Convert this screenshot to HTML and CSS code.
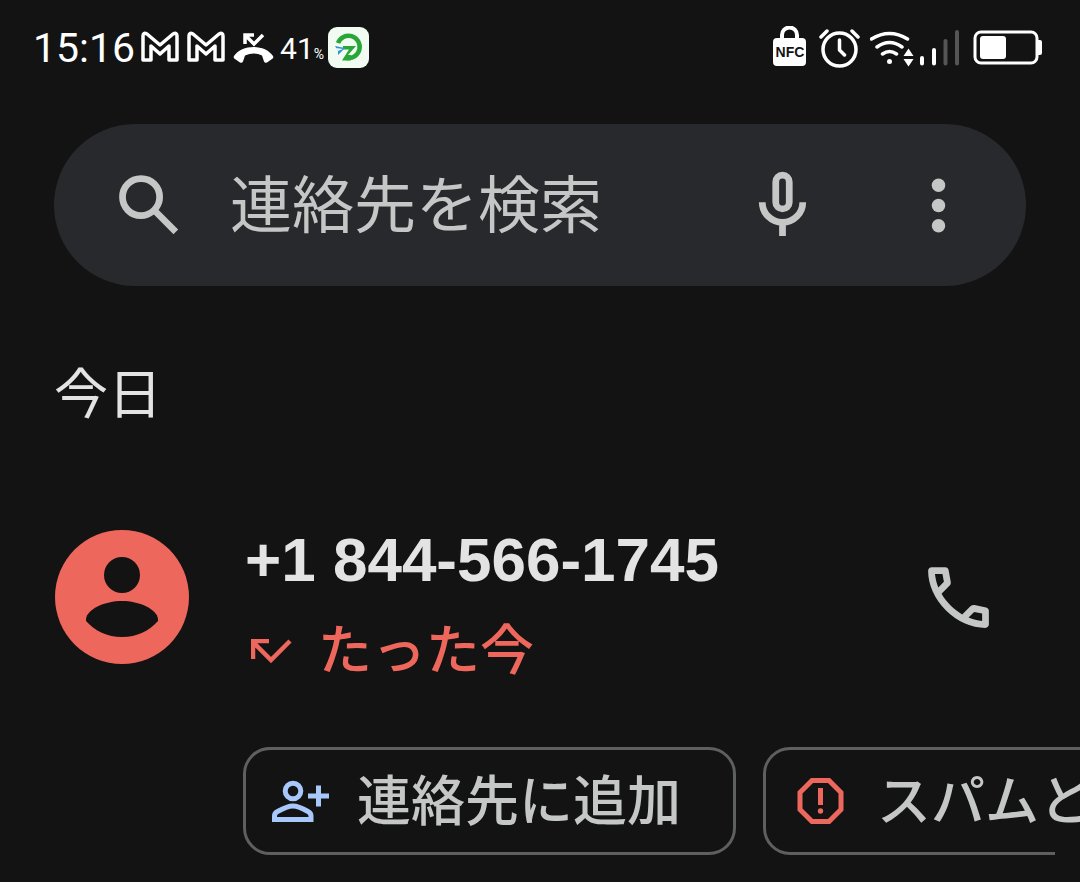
FILE: index.html
```html
<!DOCTYPE html>
<html lang="ja">
  <head>
    <meta charset="UTF-8" />
    <title>通話履歴</title>
    <meta name="viewport" content="width=device-width, initial-scale=1.0" />
    <link rel="stylesheet" href="styles.css">
  </head>
  <body>
    <header class="status-bar">
      <div class="status-left">
        <span class="clock">15:16</span>
        <svg width="40" height="44" viewBox="0 0 40 44" fill="none" stroke="#fff" stroke-width="3.500" stroke-linejoin="round">
          <path d="M2 34V10q0-4 4-2L19 19 32 8q4-2 4 2v24h-8V20l-9 8-9-8v14z" />
        </svg>
        <svg width="40" height="44" viewBox="0 0 40 44" fill="none" stroke="#fff" stroke-width="3.500" stroke-linejoin="round">
          <path d="M2 34V10q0-4 4-2L19 19 32 8q4-2 4 2v24h-8V20l-9 8-9-8v14z" />
        </svg>
        <svg width="41" height="44" viewBox="0 0 41 44">
          <path d="M12 18V9h9M12 9l9 9 9-9" fill="none" stroke="#fff" stroke-width="3.500" />
          <path d="M1 30C9 18 32 18 40 30q1 2-1 3l-5 3.500q-2 1-3-1l-2-6q-8-4-17 0l-2 6q-1 2-3 1L2 33q-2-1-1-3z" fill="#fff" />
        </svg>
        <span class="percent">41<small>%</small></span>
        <svg width="41" height="44" viewBox="0 0 41 44">
          <rect y="1" width="41" height="41" rx="9" fill="#f1fbf2" />
          <path d="M10 17A11.200 11.200 0 1 1 19 32" fill="none" stroke="#27a737" stroke-width="4.500" />
          <path d="M15 20h13l-8 9h3v5.500h-9l7-11h-6z" fill="#27a737" />
          <path d="M7 20l10 2-7 7v-4z" fill="#2b95d6" />
          <path d="M8 22l7 1-5 2z" fill="#f1fbf2" />
        </svg>
      </div>
      <div class="status-right">
        <svg width="36" height="44" viewBox="0 0 36 44">
          <path d="M10 14V9a7.500 7.500 0 0 1 15 0v5" fill="none" stroke="#fff" stroke-width="4" />
          <rect x="1" y="12" width="33" height="28" rx="4" fill="#fff" />
          <text class="nfc" x="18" y="31" text-anchor="middle">NFC</text>
        </svg>
        <svg width="42" height="44" viewBox="0 0 42 44" fill="none" stroke="#fff" stroke-width="3.500" stroke-linecap="round" stroke-linejoin="round">
          <circle cx="21.500" cy="23.500" r="16.500" />
          <path d="M21.500 14v10l5 5M3 11l6-6M40 11l-6-6" />
        </svg>
        <svg width="91" height="44" viewBox="0 0 91 44" stroke-linecap="round">
          <g fill="none" stroke="#fff" stroke-width="3.500">
            <path d="M1.500 13q18-11 36 0M7 21q12.500-9 25 0M12.500 28q7-5 14 0" />
          </g>
          <circle cx="19.500" cy="35.500" r="2.500" fill="#fff" />
          <path d="M38.500 22.500l5 7.500h-10zM38.500 40.500l5-7.500h-10z" fill="#fff" />
          <g stroke-width="4">
            <path d="M52 32v5.500M64 24v13.500" stroke="#fff" />
            <path d="M75.500 15v22.500M87 6v31.500" stroke="#555" />
          </g>
        </svg>
        <svg width="71" height="44" viewBox="0 0 71 44">
          <rect x="4" y="6" width="62" height="31" rx="6" fill="none" stroke="#fff" stroke-width="3" />
          <rect x="9" y="10" width="26" height="23" rx="3" fill="#fff" />
          <path d="M67 14h2q2 0 2 2v11q0 2-2 2h-2z" fill="#fff" />
        </svg>
      </div>
    </header>

    <form class="search" role="search">
      <label for="q" aria-label="検索">
        <svg class="icon" viewBox="0 0 24 24">
          <path d="M19.100 20.500l-5.800-5.800q-.75.6-1.725.95T9.500 16q-2.725 0-4.612-1.888T3 9.500t1.888-4.612T9.500 3t4.613 1.888T16 9.500q0 1.100-.35 2.075T14.700 13.300l5.800 5.800zM9.500 14q1.875 0 3.188-1.312T14 9.500t-1.312-3.188T9.500 5 6.313 6.313 5 9.500t1.313 3.188T9.500 14" />
        </svg>
      </label>
      <input type="text" id="q" name="q" placeholder="連絡先を検索" />
      <button type="button" aria-label="音声検索">
        <svg class="icon" viewBox="0 0 24 24">
          <g fill="none" stroke="currentColor" stroke-width="2">
            <rect x="10" y="3" width="4" height="10" rx="2" />
            <path d="M6 11a6 6 0 0 0 12 0M12 17v4" />
          </g>
        </svg>
      </button>
      <button type="button" class="more" aria-label="その他">
        <svg class="icon" viewBox="0 0 24 24">
          <circle cx="12" cy="6" r="2" />
          <circle cx="12" cy="12" r="2" />
          <circle cx="12" cy="18" r="2" />
        </svg>
      </button>
    </form>

    <main>
      <h2>今日</h2>
      <div class="call">
        <svg class="avatar" viewBox="0 0 134 134">
          <circle cx="67" cy="67" r="67" fill="#ee675c" />
          <circle cx="67" cy="45" r="18" fill="#131313" />
          <path d="M31 89C32 79 50 71 67 71s35 8 36 18v2c-9 10-21 16-36 16s-27-6-36-16z" fill="#131313" />
        </svg>
        <div class="info">
          <div class="number">+1 844-566-1745</div>
          <div class="time">
            <svg width="42" height="26" viewBox="0 0 42 26" fill="none" stroke="currentColor" stroke-width="4.500">
              <path d="M2 20V2h16M2 3l18 18L39 2" />
            </svg>
            たった今
          </div>
        </div>
        <button type="button" aria-label="発信">
          <svg class="icon" viewBox="0 0 24 24">
            <path d="M19.950 21q-3.125 0-6.175-1.363t-5.550-3.862-3.862-5.550T3 4.050q0-.45.3-.75t.75-.3H8.100q.35 0 .625.238t.325.562l.65 3.500q.05.4-.025.675T9.400 8.450L6.975 10.900q.5.925 1.187 1.787t1.513 1.663q.775.775 1.625 1.438T13.100 17l2.350-2.350q.225-.225.588-.337t.712-.063l3.450.7q.35.1.575.363T21 15.900v4.050q0 .45-.3.75t-.75.3M6.025 9l1.650-1.650L7.250 5H5.025q.125 1.025.35 2.025T6.025 9m8.950 8.950q.975.425 1.988.675T19 18.950v-2.200l-2.350-.475z" />
          </svg>
        </button>
      </div>
      <div class="chips">
        <button type="button" class="chip">
          <svg width="57" height="42" viewBox="0 0 57 42" fill="none" stroke="#a8c7fa" stroke-width="5">
            <circle cx="21" cy="11" r="7.800" />
            <path d="M2.500 39.500H39V36q0-3-3-4.500C30 28 25 26 20.700 26S12 28 5.500 31.500Q2.500 33 2.500 36zM46.500 5.500v21M36 16h21" />
          </svg>
          <span>連絡先に追加</span>
        </button>
        <button type="button" class="chip">
          <svg width="57" height="48" viewBox="0 0 57 48" fill="none" stroke="#ee675c" stroke-width="5">
            <path d="M20 3.500h17L49 15.500v17L37 44.500H20L8 32.500v-17z" />
            <path d="M28.500 11v17" />
            <circle cx="28.500" cy="34" r="2.700" fill="#ee675c" stroke="none" />
          </svg>
          <span>スパムと</span>
        </button>
      </div>
    </main>
  </body>
</html>
```
FILE: styles.css
```css
* {
  box-sizing: border-box;
}
body {
  margin: 0;
  min-height: 100vh;
  background-color: #131313;
  color: #e3e3e3;
  font-family: Roboto, "Noto Sans CJK JP", sans-serif;
  overflow-x: hidden;
}
svg {
  display: block;
  flex-shrink: 0;
}
button {
  padding: 0;
  border: none;
  background: none;
  color: #c4c7c5;
  font-family: inherit;
  cursor: pointer;
}
.status-bar {
  display: flex;
  justify-content: space-between;
  padding: 26px 38px 0 33px;
  color: white;
}
.status-left,
.status-right {
  display: flex;
  align-items: center;
  height: 44px;
}
.status-left {
  gap: 6px;
}
.status-right {
  gap: 10px;
}
.clock {
  font-size: 41px;
}
.percent {
  width: 42px;
  font-size: 30px;
  white-space: nowrap;
}
.percent small {
  font-size: 14px;
}
.nfc {
  font-family: "Liberation Sans", sans-serif;
  font-size: 14px;
  font-weight: bold;
  fill: #131313;
}
.icon {
  width: 81px;
  height: 81px;
  fill: currentColor;
}
.search {
  display: flex;
  align-items: center;
  height: 162px;
  margin: 54px 54px 0;
  padding: 0 47px 0 55px;
  border-radius: 81px;
  background-color: #28292c;
  color: #c4c7c5;
}
.search input {
  flex: 1;
  min-width: 0;
  margin-left: 40px;
  padding: 0 0 8px;
  border: none;
  outline: none;
  background: none;
  color: inherit;
  font-family: "Noto Sans CJK JP", sans-serif;
  font-size: 62px;
  line-height: 90px;
}
.search input::placeholder {
  color: #c4c7c5;
  opacity: 1;
}
.search .more {
  margin-left: 75px;
}
h2 {
  margin: 70px 54px 0;
  font-size: 54px;
  font-weight: normal;
  line-height: 80px;
}
.call {
  display: flex;
  align-items: center;
  margin-top: 59px;
  padding: 0 81px 0 55px;
}
.avatar {
  width: 134px;
  height: 134px;
}
.info {
  flex: 1;
  margin-left: 56px;
  padding-top: 20px;
}
.number {
  font-family: "Liberation Sans", sans-serif;
  font-size: 62px;
  font-weight: bold;
  line-height: 90px;
  white-space: nowrap;
}
.time {
  display: flex;
  align-items: center;
  gap: 25px;
  margin-left: 6px;
  color: #ee675c;
  font-size: 54px;
  font-weight: 500;
  line-height: 94px;
}
.chips {
  position: relative;
  display: flex;
  gap: 27px;
  margin-top: 48px;
  padding-left: 243px;
  overflow: hidden;
}
/* the outline stops short at the scroll edge */
.chips::after {
  content: "";
  position: absolute;
  right: 0;
  bottom: 0;
  width: 25px;
  height: 4px;
  background-color: #131313;
}
.chip {
  display: flex;
  flex-shrink: 0;
  align-items: center;
  gap: 28px;
  height: 108px;
  padding: 0 52px 0 26px;
  border: 3px solid #5e6060;
  border-radius: 27px;
  font-size: 54px;
  font-weight: 500;
  white-space: nowrap;
}
.chip span {
  padding-bottom: 8px;
}
```
